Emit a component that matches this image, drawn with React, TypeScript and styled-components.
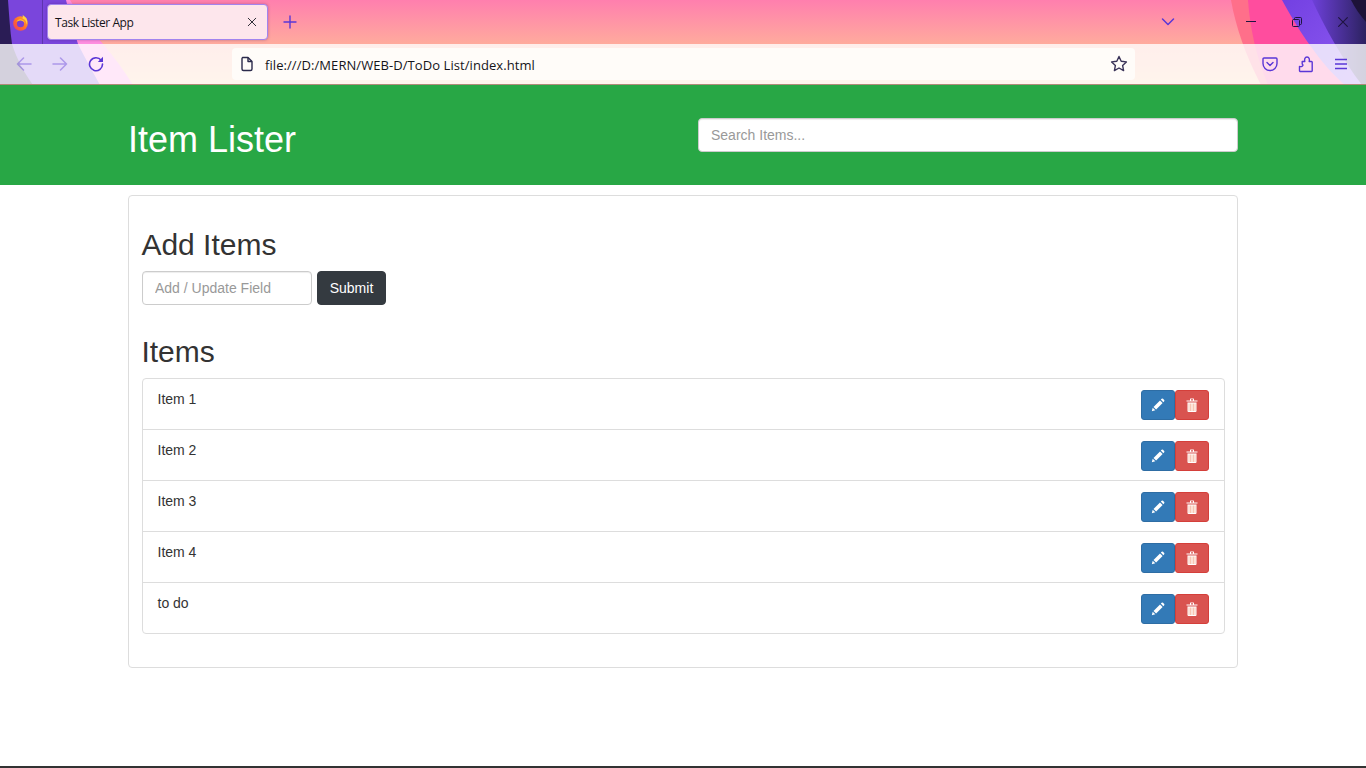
import React from 'react';
import styled, {createGlobalStyle} from 'styled-components';

const items = ['Item 1', 'Item 2', 'Item 3', 'Item 4', 'to do'];

const GlobalStyle = createGlobalStyle`
    html, body {
        margin: 0;
        height: 100%;
        overflow: hidden;
        background: #fff;
    }
    * {
        box-sizing: border-box;
    }
    body {
        font-family: "Liberation Sans", Arial, sans-serif;
        font-size: 14px;
        line-height: 20px;
        color: #333;
    }
`;

const Page = styled.div`
    display: flex;
    flex-direction: column;
    height: 100vh;
`;

const BrowserChrome = styled.div`
    position: relative;
    height: 85px;
    flex: none;
    overflow: hidden;
    border-bottom: 1px solid #b08a78;
`;

const ChromeArt = styled.svg`
    position: absolute;
    top: 0;
    left: 0;
`;

const TabStrip = styled.div`
    position: relative;
    display: flex;
    align-items: center;
    height: 44px;
    padding-right: 15px;
`;

const FirefoxButton = styled.div`
    display: flex;
    align-items: center;
    justify-content: center;
    width: 43px;
    height: 44px;
    padding-right: 1px;
    border-right: 1px solid rgba(40, 20, 90, 0.35);
    margin-right: 4px;
`;

const Tab = styled.div`
    display: flex;
    align-items: center;
    justify-content: space-between;
    width: 221px;
    height: 36px;
    padding: 0 9px 0 7px;
    background: #fde6ec;
    border: 1px solid #a284ee;
    border-radius: 4px;
    box-shadow: 0 0 3px rgba(60, 20, 90, 0.35);
    font-family: "Open Sans", sans-serif;
    font-size: 12px;
    color: #15141a;
`;

const TabTitle = styled.span`
    margin-top: 2px;
    letter-spacing: -0.42px;
`;

const StripIcon = styled.div<{$gap?: number}>`
    display: flex;
    align-items: center;
    justify-content: center;
    width: 16px;
    height: 16px;
    margin-left: ${p => p.$gap ?? 0}px;
`;

const Spacer = styled.div`
    flex: 1;
`;

const Toolbar = styled.div`
    position: relative;
    display: flex;
    align-items: center;
    height: 40px;
`;

const NavIcons = styled.div`
    display: flex;
    align-items: center;
    gap: 20px;
    width: 232px;
    padding-left: 16px;
`;

const NavIcon = styled.svg<{$dim?: boolean}>`
    opacity: ${p => (p.$dim ? 0.4 : 1)};
`;

const UrlBar = styled.div`
    display: flex;
    align-items: center;
    width: 903px;
    height: 32px;
    padding: 0 7px 0 7px;
    background: #fffcf9;
    border-radius: 4px;
`;

const UrlText = styled.span`
    flex: 1;
    margin: 2px 0 0 10px;
    font-family: "Open Sans", sans-serif;
    font-size: 13px;
    letter-spacing: 0.07px;
    color: #15141a;
`;

const ToolIcons = styled.div`
    display: flex;
    align-items: center;
    gap: 20px;
    margin-left: 127px;
`;

const HeaderBar = styled.header`
    flex: none;
    height: 100px;
    background: #28a745;
`;

const HeaderInner = styled.div`
    display: flex;
    justify-content: space-between;
    align-items: flex-start;
    width: 1110px;
    margin: 0 auto;
    padding-top: 33px;
`;

const Title = styled.h1`
    margin: 2px 0 0;
    font-size: 36px;
    font-weight: 400;
    line-height: 40px;
    color: #fff;
`;

const TextInput = styled.input<{$width: number}>`
    width: ${p => p.$width}px;
    height: 34px;
    padding: 6px 12px;
    font-family: "Liberation Sans", Arial, sans-serif;
    font-size: 14px;
    color: #555;
    background: #fff;
    border: 1px solid #ccc;
    border-radius: 4px;
    box-shadow: inset 0 1px 1px rgba(0, 0, 0, 0.075);
    outline: none;

    &::placeholder {
        color: #999;
        opacity: 1;
    }
`;

const Main = styled.main`
    flex: 1;
    padding-top: 10px;
`;

const Panel = styled.section`
    width: 1110px;
    margin: 0 auto;
    padding: 32px 12px 33px 13px;
    background: #fff;
    border: 1px solid #ddd;
    border-radius: 4px;
`;

const SectionTitle = styled.h2`
    margin: 0 0 10px -0.6px;
    font-size: 30px;
    font-weight: 400;
    line-height: 33px;
    color: #333;
`;

const AddForm = styled.form`
    display: flex;
    gap: 5px;
    margin-bottom: 30px;
`;

const SubmitButton = styled.button`
    width: 69px;
    height: 34px;
    padding: 0;
    font-family: "Liberation Sans", Arial, sans-serif;
    font-size: 14px;
    color: #fff;
    background: #343a40;
    border: 1px solid #343a40;
    border-radius: 4px;
`;

const ItemList = styled.ul`
    margin: 0;
    padding: 0;
    list-style: none;
    border: 1px solid #ddd;
    border-radius: 4px;
`;

const ItemRow = styled.li`
    display: flex;
    justify-content: space-between;
    align-items: flex-start;
    height: 51px;
    padding: 10px 15px 0 14.5px;
    border-bottom: 1px solid #ddd;

    &:last-child {
        height: 50px;
        border-bottom: 0;
    }
`;

const ItemActions = styled.div`
    display: flex;
    margin-top: 1px;
`;

const ActionButton = styled.button<{$kind: 'edit' | 'remove'}>`
    display: flex;
    align-items: center;
    justify-content: center;
    width: 34px;
    height: 30px;
    padding: 0;
    background: ${p => (p.$kind === 'edit' ? '#337ab7' : '#d9534f')};
    border: 1px solid ${p => (p.$kind === 'edit' ? '#2e6da4' : '#d43f3a')};
    border-radius: 3px;
`;

const BottomEdge = styled.div`
    flex: none;
    height: 2px;
    background: #333;
`;

const PURPLE = '#5a37d6';

const Art = () => (
    <ChromeArt width="1366" height="85" viewBox="0 0 1366 85">
        <defs>
            <linearGradient id="sky" x1="0" y1="0" x2="0" y2="1">
                <stop offset="0" stopColor="#ff7fae" />
                <stop offset="0.52" stopColor="#ffab9d" />
                <stop offset="1" stopColor="#ffc9a0" />
            </linearGradient>
            <linearGradient id="violet" x1="0" y1="0" x2="1" y2="1">
                <stop offset="0" stopColor="#7340e2" />
                <stop offset="1" stopColor="#8f5cf2" />
            </linearGradient>
            <linearGradient id="dusk" x1="0" y1="0" x2="1" y2="0">
                <stop offset="0" stopColor="#6e40da" />
                <stop offset="1" stopColor="#2c2260" />
            </linearGradient>
        </defs>
        <rect width="1366" height="85" fill="url(#sky)" />
        <path d="M70 0C80 16 92 32 103 44C115 58 125 72 133 85H0V0Z" fill="#ff8ee0" />
        <path d="M66 0C70 16 74 32 78 44C86 60 94 74 100 85H0V0Z" fill="#7a45dc" />
        <path d="M0 0H8C9 14 10 30 12 44C17 60 25 74 33 85H0Z" fill="#2a1c55" />
        <path d="M1231 0H1366V85H1261C1246 56 1236 28 1231 0Z" fill="#ff6f8a" />
        <path d="M1248 0H1366V85H1268C1256 56 1250 28 1248 0Z" fill="#ff4d9e" />
        <path d="M1282 0H1366V85H1345C1322 66 1298 30 1282 0Z" fill="url(#violet)" />
        <path d="M1312 0H1366V85H1362C1344 62 1325 28 1312 0Z" fill="url(#dusk)" />
        <path d="M1351 0H1366V22C1360 15 1355 8 1351 0Z" fill="#1d1238" />
        <rect y="44" width="1366" height="41" fill="#fff" opacity="0.8" />
    </ChromeArt>
);

const FirefoxLogo = () => (
    <svg width="17" height="17" viewBox="0 0 17 17">
        <defs>
            <linearGradient id="flame" x1="1" y1="0" x2="0" y2="1">
                <stop offset="0" stopColor="#ffb02e" />
                <stop offset="0.55" stopColor="#ff6a2b" />
                <stop offset="1" stopColor="#f0386b" />
            </linearGradient>
        </defs>
        <circle cx="8.500" cy="9.500" r="7.300" fill="url(#flame)" />
        <path d="M10.500 0.800C11.200 2.200 11 3.400 10.300 4.300C13 5.300 14.600 7.500 14.400 10.500C15.800 8 15.400 4.800 13.300 3C12.500 2.300 11.500 1.600 10.500 0.800Z" fill="#ffd23f" />
        <circle cx="8.500" cy="9.700" r="3.600" fill="#7b3fd6" />
        <path d="M4.400 8.300C5.200 5.600 8 4.600 10.600 5.900C12 6.600 12.700 7.800 12.800 9.200C11.800 7.400 10 6.500 8.200 6.600C6.600 6.700 5.300 7.400 4.400 8.300Z" fill="#ffc531" />
    </svg>
);

const CloseGlyph = ({size, color}: {size: number; color: string}) => (
    <svg width={size} height={size} viewBox="0 0 16 16" fill="none" stroke={color} strokeWidth="1.3" strokeLinecap="round">
        <path d="M3 3L13 13M13 3L3 13" />
    </svg>
);

const App = () => (
    <Page>
        <GlobalStyle />
        <BrowserChrome>
            <Art />
            <TabStrip>
                <FirefoxButton>
                    <FirefoxLogo />
                </FirefoxButton>
                <Tab>
                    <TabTitle>Task Lister App</TabTitle>
                    <CloseGlyph size={12} color="#2b2a33" />
                </Tab>
                <StripIcon $gap={14}>
                    <svg width="14" height="14" viewBox="0 0 14 14" stroke={PURPLE} strokeWidth="1.4" strokeLinecap="round">
                        <path d="M7 1V13M1 7H13" />
                    </svg>
                </StripIcon>
                <Spacer />
                <StripIcon>
                    <svg width="14" height="10" viewBox="0 0 14 10" fill="none" stroke={PURPLE} strokeWidth="1.5" strokeLinecap="round" strokeLinejoin="round">
                        <path d="M1.500 2L7 7.500L12.500 2" />
                    </svg>
                </StripIcon>
                <StripIcon $gap={67}>
                    <svg width="10" height="2" viewBox="0 0 10 2">
                        <rect width="10" height="1" fill="#1f1440" />
                    </svg>
                </StripIcon>
                <StripIcon $gap={30}>
                    <svg width="10" height="10" viewBox="0 0 10 10" fill="none" stroke="#1f1440">
                        <rect x="0.500" y="2.500" width="7" height="7" rx="1" />
                        <path d="M2.500 2.500V1.500a1 1 0 0 1 1-1H8.500a1 1 0 0 1 1 1V6.500a1 1 0 0 1-1 1H7.500" />
                    </svg>
                </StripIcon>
                <StripIcon $gap={30}>
                    <CloseGlyph size={14} color="#1f1440" />
                </StripIcon>
            </TabStrip>
            <Toolbar>
                <NavIcons>
                    <NavIcon $dim width="16" height="16" viewBox="0 0 16 16" fill="none" stroke={PURPLE} strokeWidth="1.5" strokeLinecap="round" strokeLinejoin="round">
                        <path d="M15 8H1.500M7.500 2L1.500 8L7.500 14" />
                    </NavIcon>
                    <NavIcon $dim width="16" height="16" viewBox="0 0 16 16" fill="none" stroke={PURPLE} strokeWidth="1.5" strokeLinecap="round" strokeLinejoin="round">
                        <path d="M1 8H14.500M8.500 2L14.500 8L8.500 14" />
                    </NavIcon>
                    <NavIcon width="16" height="16" viewBox="0 0 16 16" fill="none" stroke={PURPLE} strokeWidth="1.6" strokeLinecap="round">
                        <path d="M13.200 4.300A6.500 6.500 0 1 0 14.500 8" />
                        <path d="M15 0.800V6H9.800Z" fill={PURPLE} stroke="none" />
                    </NavIcon>
                </NavIcons>
                <UrlBar>
                    <svg width="16" height="16" viewBox="0 0 16 16" fill="none" stroke="#2b2a4c" strokeWidth="1.4" strokeLinejoin="round">
                        <path d="M3.500 1.500H9L13 5.500V13a1.500 1.500 0 0 1-1.500 1.500H4.500A1.500 1.500 0 0 1 3 13V2.500Z" />
                        <path d="M9 1.500V5.500H13" />
                    </svg>
                    <UrlText>file:///D:/MERN/WEB-D/ToDo List/index.html</UrlText>
                    <svg width="18" height="18" viewBox="0 0 18 18" fill="none" stroke="#3a3358" strokeWidth="1.4" strokeLinejoin="round">
                        <path d="M9 1.500L11.200 6.300L16.400 6.900L12.600 10.400L13.600 15.600L9 13L4.400 15.600L5.400 10.400L1.600 6.900L6.800 6.300Z" />
                    </svg>
                </UrlBar>
                <ToolIcons>
                    <svg width="16" height="16" viewBox="0 0 16 16" fill="none" stroke={PURPLE} strokeWidth="1.4" strokeLinecap="round" strokeLinejoin="round">
                        <path d="M2 2H14a1 1 0 0 1 1 1V7.500A7 7 0 0 1 1 7.500V3a1 1 0 0 1 1-1Z" />
                        <path d="M5 6.500L8 9.500L11 6.500" />
                    </svg>
                    <svg width="16" height="17" viewBox="0 0 16 17" fill="none" stroke={PURPLE} strokeWidth="1.4" strokeLinejoin="round">
                        <path d="M4.200 5.500H6.800C6.200 3.500 6.800 1 9 1C11.200 1 11.800 3.500 11.200 5.500H13.500a.7 .7 0 0 1 .7 .7V14.800a.7 .7 0 0 1-.7 .7H2.500a1 1 0 0 1-1-1V10.500C3.500 11 5 10 5 9C5 8.500 4.200 8.500 4.200 8Z" />
                    </svg>
                    <svg width="14" height="12" viewBox="0 0 14 12" stroke={PURPLE} strokeWidth="1.300">
                        <path d="M1 1.500H13M1 6H13M1 10.500H13" />
                    </svg>
                </ToolIcons>
            </Toolbar>
        </BrowserChrome>
        <HeaderBar>
            <HeaderInner>
                <Title>Item Lister</Title>
                <TextInput $width={540} placeholder="Search Items..." />
            </HeaderInner>
        </HeaderBar>
        <Main>
            <Panel>
                <SectionTitle>Add Items</SectionTitle>
                <AddForm>
                    <TextInput $width={170} placeholder="Add / Update Field" />
                    <SubmitButton type="button">Submit</SubmitButton>
                </AddForm>
                <SectionTitle>Items</SectionTitle>
                <ItemList>
                    {items.map(item => (
                        <ItemRow key={item}>
                            <span>{item}</span>
                            <ItemActions>
                                <ActionButton $kind="edit" type="button">
                                    <svg width="14" height="14" viewBox="0 0 14 14" fill="#fff">
                                        <path d="M0.800 13.200L1.700 9.700L4.300 12.300Z" />
                                        <path d="M2.500 8.900L9 2.400L11.600 5L5.100 11.500Z" />
                                        <path d="M9.800 1.600L10.700 0.800a1 1 0 0 1 1.300 0L13.200 2a1 1 0 0 1 0 1.300L12.400 4.200Z" />
                                    </svg>
                                </ActionButton>
                                <ActionButton $kind="remove" type="button">
                                    <svg width="12" height="14" viewBox="0 0 12 14">
                                        <path d="M0.500 2.500H11.500V3.500H0.500ZM4 2.500V1a.5 .5 0 0 1 .5-.5H7.500a.5 .5 0 0 1 .5.5V2.500H7V1.300H5V2.500Z" fill="#fff" />
                                        <path d="M1.500 4.500H10.500V13a1 1 0 0 1-1 1H2.500a1 1 0 0 1-1-1Z" fill="#fff" />
                                        <path d="M3 5.500V13M4.500 5.500V13M6 5.500V13M7.500 5.500V13M9 5.500V13" stroke="#f6b8a0" strokeWidth="0.800" />
                                    </svg>
                                </ActionButton>
                            </ItemActions>
                        </ItemRow>
                    ))}
                </ItemList>
            </Panel>
        </Main>
        <BottomEdge />
    </Page>
);

export default App;
